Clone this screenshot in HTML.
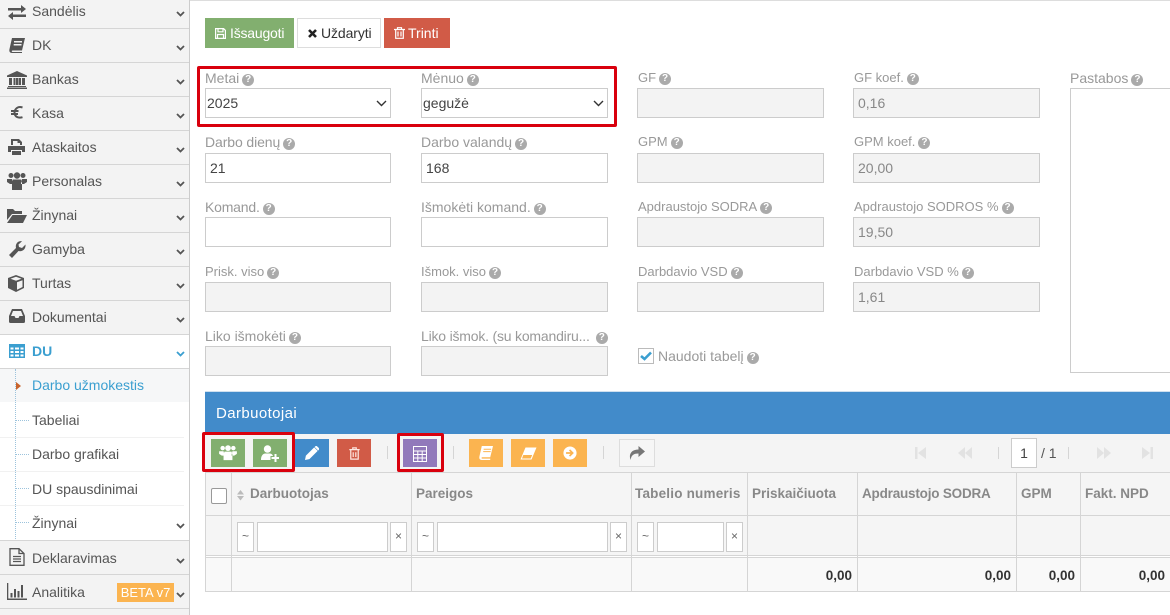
<!DOCTYPE html>
<html><head><meta charset="utf-8">
<style>
html,body{margin:0;padding:0}
body{width:1170px;height:615px;overflow:hidden;position:relative;background:#fff;font-family:"Liberation Sans",sans-serif;font-size:14px;color:#555}
.a,.s,.t,.l,.i,.btn,.h,.ln,.tb,.th,.fx,.ft{position:absolute}
svg{display:block}
.side{position:absolute;left:0;top:0;width:189px;height:615px;background:#f3f3f3;border-right:1px solid #ccc}
.s{left:0;width:189px;height:1px;background:#d5d5d5}
.t{left:32px;line-height:20px;color:#555;white-space:nowrap}
.i{fill:#555}
.c{position:absolute;left:176px;fill:none;stroke:#555;stroke-width:1.800}
.l{line-height:16px;color:#999;white-space:nowrap}
.n{font-size:13px}
.q{display:inline-block;width:12px;height:12px;border-radius:50%;background:#aaa;color:#fff;font:bold 10px/12px "Liberation Sans",sans-serif;text-align:center;margin-left:3px;vertical-align:1px}
.f{position:absolute;box-sizing:border-box;height:30px;border:1px solid #ccc;background:#fff;color:#444;padding:0 4px;line-height:29px;white-space:nowrap}
.d{background:#f3f3f3;color:#888}
.w{width:187px}
.x{width:186px}
.btn{top:18px;height:30px;box-sizing:border-box;color:#fff;line-height:30px;white-space:nowrap}
.tb{top:439px;width:34px;height:28px}
.tb svg{margin:5px auto 0}
.ln{background:#d5d5d5}
.th{top:472px;line-height:43px;font-weight:bold;color:#888;font-size:13.500px;white-space:nowrap}
.fx{top:522px;height:30px;box-sizing:border-box;background:#fff;border:1px solid #ccc;color:#666;text-align:center;font-size:12px;line-height:27px}
.ft{top:558px;height:33px;line-height:35px;font-weight:bold;color:#333;font-size:13.500px;text-align:right}
</style></head><body>

<div class="side"></div>
<div class="a" style="left:0;top:334px;width:189px;height:34px;background:#fff"></div>
<div class="a" style="left:0;top:369px;width:189px;height:171px;background:#fff"></div>
<div class="a" style="left:0;top:369px;width:189px;height:33px;background:#f6f7f8"></div>
<div class="a" style="left:15px;top:369px;width:0;height:170px;border-left:1px dotted #9cc3dc"></div>
<div class="a" style="left:16px;top:420px;width:13px;border-top:1px dotted #9cc3dc"></div>
<div class="a" style="left:16px;top:454px;width:13px;border-top:1px dotted #9cc3dc"></div>
<div class="a" style="left:16px;top:488px;width:13px;border-top:1px dotted #9cc3dc"></div>
<div class="a" style="left:16px;top:522px;width:13px;border-top:1px dotted #9cc3dc"></div>
<div class="a" style="left:0;top:437px;width:184px;height:1px;background:#f1f1f1"></div>
<div class="a" style="left:0;top:471px;width:184px;height:1px;background:#f1f1f1"></div>
<div class="a" style="left:0;top:505px;width:184px;height:1px;background:#f1f1f1"></div>

<div class="s" style="top:28px"></div><div class="s" style="top:62px"></div><div class="s" style="top:96px"></div><div class="s" style="top:130px"></div><div class="s" style="top:164px"></div><div class="s" style="top:198px"></div><div class="s" style="top:232px"></div><div class="s" style="top:266px"></div><div class="s" style="top:300px"></div><div class="s" style="top:334px"></div><div class="s" style="top:368px"></div><div class="s" style="top:540px"></div><div class="s" style="top:574px"></div><div class="s" style="top:608px"></div>

<div class="t" style="top:1px">Sandėlis</div>
<div class="t" style="top:35px">DK</div>
<div class="t" style="top:69px">Bankas</div>
<div class="t" style="top:103px">Kasa</div>
<div class="t" style="top:137px">Ataskaitos</div>
<div class="t" style="top:171px">Personalas</div>
<div class="t" style="top:205px">Žinynai</div>
<div class="t" style="top:239px">Gamyba</div>
<div class="t" style="top:273px">Turtas</div>
<div class="t" style="top:307px">Dokumentai</div>
<div class="t" style="top:341px;color:#3b9fd0;font-weight:bold">DU</div>
<div class="t" style="top:375px;color:#3b9fd0">Darbo užmokestis</div>
<div class="t" style="top:410px">Tabeliai</div>
<div class="t" style="top:444px">Darbo grafikai</div>
<div class="t" style="top:479px">DU spausdinimai</div>
<div class="t" style="top:513px">Žinynai</div>
<div class="t" style="top:548px">Deklaravimas</div>
<div class="t" style="top:582px">Analitika</div>
<div class="a" style="left:117px;top:583px;width:57px;height:19px;background:#fbb450;color:#fff;font-size:13px;line-height:19px;text-align:center">BETA v7</div>
<svg class="a" style="left:16px;top:382px" width="5" height="8"><path d="M0 0L5 4L0 8Z" fill="#c8632c"/></svg>

<svg class="c" style="top:11px" width="9" height="6"><path d="M1 1L4.500 4.500L8 1"/></svg>
<svg class="c" style="top:45px" width="9" height="6"><path d="M1 1L4.500 4.500L8 1"/></svg>
<svg class="c" style="top:79px" width="9" height="6"><path d="M1 1L4.500 4.500L8 1"/></svg>
<svg class="c" style="top:113px" width="9" height="6"><path d="M1 1L4.500 4.500L8 1"/></svg>
<svg class="c" style="top:147px" width="9" height="6"><path d="M1 1L4.500 4.500L8 1"/></svg>
<svg class="c" style="top:181px" width="9" height="6"><path d="M1 1L4.500 4.500L8 1"/></svg>
<svg class="c" style="top:215px" width="9" height="6"><path d="M1 1L4.500 4.500L8 1"/></svg>
<svg class="c" style="top:249px" width="9" height="6"><path d="M1 1L4.500 4.500L8 1"/></svg>
<svg class="c" style="top:283px" width="9" height="6"><path d="M1 1L4.500 4.500L8 1"/></svg>
<svg class="c" style="top:317px" width="9" height="6"><path d="M1 1L4.500 4.500L8 1"/></svg>
<svg class="c" style="top:351px;stroke:#3b9fd0" width="9" height="6"><path d="M1 1L4.500 4.500L8 1"/></svg>
<svg class="c" style="top:523px" width="9" height="6"><path d="M1 1L4.500 4.500L8 1"/></svg>
<svg class="c" style="top:558px" width="9" height="6"><path d="M1 1L4.500 4.500L8 1"/></svg>
<svg class="c" style="top:592px" width="9" height="6"><path d="M1 1L4.500 4.500L8 1"/></svg>

<!-- sidebar icons -->
<svg class="i a" style="left:8px;top:5px" width="18" height="15" viewBox="0 0 18 15"><path d="M0 3h13V0l5 4-5 4V5.500H0zM18 9.500H5V7l-5 4 5 4v-3h13z"/></svg>
<svg class="i a" style="left:9px;top:38px" width="16" height="15" viewBox="0 0 16 15"><path d="M3 0h13l-3 12.500H3.500C2.500 12.500 2.500 14 3.500 14H13v1H3C.5 15 0 13 .5 11zM5 3v1.500h8V3zM4.700 6v1.500h7.800V6z"/></svg>
<svg class="i a" style="left:7px;top:71px" width="20" height="18" viewBox="0 0 20 18"><path d="M10 0L20 4.500V6H0V4.500zM2 7h3v7H2zM6.500 7h2v7h-2zM9 7h2.500v7H9zM12 7h2v7h-2zM15 7h3v7h-3zM1 15h18v1H1zM0 16.500h20V18H0z"/></svg>
<svg class="a" style="left:11px;top:106px" width="12" height="13" viewBox="0 0 12 13"><path d="M11.500 1.500C7 0 4 2.500 3.500 6.500c0 4 3.500 6 8 4.700M0 5h7.500M0 8h7" fill="none" stroke="#555" stroke-width="2"/></svg>
<svg class="i a" style="left:8px;top:139px" width="17" height="16" viewBox="0 0 17 16"><path d="M3 0h8l3 3v3h-2V4H9.500V2H5v4H3zM0 7h17v6h-3v-2H3v2H0zM4 12h9v4H4z"/></svg>
<svg class="i a" style="left:7px;top:172px" width="20" height="18" viewBox="0 0 20 18"><circle cx="4" cy="3.500" r="2.500"/><circle cx="16" cy="3.500" r="2.500"/><circle cx="10" cy="3.500" r="3.200"/><path d="M0 7h5l1 4v1H3L0 10zM20 7h-5l-1 4v1h3l3-2zM6 7.500h8L15 11v7H5v-7z"/></svg>
<svg class="i a" style="left:7px;top:208px" width="20" height="15" viewBox="0 0 20 15"><path d="M0 1h6l2 2h7v3H5L0 12zM5.500 7H20l-4 8H0z"/></svg>
<svg class="i a" style="left:9px;top:241px" width="17" height="17" viewBox="0 0 17 17"><path d="M0 14L7 7C6 3 9-.5 13 .3L9.500 3.500 10 6l3 1L16.500 3.500C17 8 13.500 11 9.500 10L3 17z"/></svg>
<svg class="i a" style="left:8px;top:275px" width="16" height="17" viewBox="0 0 16 17"><path d="M8 0L16 3v10l-8 4-8-4V3zM2.500 3.700L8 5.800l5.500-2.100L8 1.800zM9 7.300v7.500l5.500-2.800V5.200z"/></svg>
<svg class="i a" style="left:9px;top:309px" width="16" height="14" viewBox="0 0 16 14"><path d="M3 0h10l3 7v5.500c0 1-.5 1.500-1.500 1.500h-13C.5 14 0 13.500 0 12.500V7zM4 2L2 7h3.500l1 2h3l1-2H14l-2-5z"/></svg>
<svg class="a" style="left:9px;top:344px" width="16" height="14" viewBox="0 0 16 14" fill="#3b9fd0"><path d="M0 0h16v14H0zM1.500 3.500v2h3v-2zM6 3.500v2h4v-2zM11.500 3.500v2h3v-2zM1.500 7v2h3V7zM6 7v2h4V7zM11.500 7v2h3V7zM1.500 10.500v2h3v-2zM6 10.500v2h4v-2zM11.500 10.500v2h3v-2z" fill-rule="evenodd"/></svg>
<svg class="a" style="left:9px;top:548px" width="16" height="18" viewBox="0 0 16 18" fill="none" stroke="#555" stroke-width="1.300"><path d="M1 .7h9L15 5.500V17.300H1zM10 .7V5.500h5M4 8.500h8M4 11h8M4 13.500h8"/></svg>
<svg class="i a" style="left:7px;top:583px" width="20" height="17" viewBox="0 0 20 17"><path d="M0 0h1.300v15.500H20V17H0zM3.500 10h2v4.500h-2zM7 6h2v8.500H7zM10.500 8h2v6.500h-2zM14 2h2v12.500h-2z"/></svg>

<!-- main top -->
<div class="a" style="left:190px;top:0;width:980px;height:1px;background:#ddd"></div>
<div class="btn" style="left:205px;width:89px;background:#82af6f;padding-left:25px;letter-spacing:-.2px">Išsaugoti</div>
<svg class="a" style="left:215px;top:28px" width="11" height="11" viewBox="0 0 11 11" fill="none" stroke="#fff" stroke-width="1.200"><path d="M.6.6h8L10.400 2.400v8H.6zM3 .8v3h5v-3M2.500 10.200V6.500h6v3.700"/></svg>
<div class="btn" style="left:297px;width:84px;background:#fff;border:1px solid #ddd;color:#333;padding-left:23px;line-height:28px;letter-spacing:-.1px">Uždaryti</div>
<svg class="a" style="left:308px;top:29px" width="9" height="9" viewBox="0 0 9 9"><path d="M1 1L8 8M8 1L1 8" stroke="#222" stroke-width="2.600"/></svg>
<div class="btn" style="left:384px;width:66px;background:#d15b47;padding-left:24px">Trinti</div>
<svg class="a" style="left:394px;top:27px" width="11" height="12" viewBox="0 0 11 12" fill="none" stroke="#fff" stroke-width="1.200"><path d="M0 2.500h11M3.500 2.500V.7h4v1.800M1.700 2.500V11.300h7.600V2.500M4 4.500v5M7 4.500v5"/></svg>

<!-- labels -->
<div class="l" style="left:205px;top:70px">Metai<span class="q">?</span></div>
<div class="l" style="left:421px;top:70px">Mėnuo<span class="q">?</span></div>
<div class="l n" style="left:638px;top:70px">GF<span class="q">?</span></div>
<div class="l n" style="left:854px;top:70px">GF koef.<span class="q">?</span></div>
<div class="l" style="left:1070px;top:70px">Pastabos<span class="q">?</span></div>
<div class="l" style="left:205px;top:134px;letter-spacing:-.1px">Darbo dienų<span class="q">?</span></div>
<div class="l" style="left:421px;top:134px">Darbo valandų<span class="q">?</span></div>
<div class="l n" style="left:638px;top:134px">GPM<span class="q">?</span></div>
<div class="l n" style="left:854px;top:134px">GPM koef.<span class="q">?</span></div>
<div class="l" style="left:205px;top:199px;letter-spacing:-.2px">Komand.<span class="q">?</span></div>
<div class="l" style="left:421px;top:199px">Išmokėti komand.<span class="q">?</span></div>
<div class="l n" style="left:638px;top:199px">Apdraustojo SODRA<span class="q">?</span></div>
<div class="l n" style="left:854px;top:199px">Apdraustojo SODROS %<span class="q">?</span></div>
<div class="l n" style="left:205px;top:264px">Prisk. viso<span class="q">?</span></div>
<div class="l n" style="left:421px;top:264px">Išmok. viso<span class="q">?</span></div>
<div class="l n" style="left:638px;top:264px">Darbdavio VSD<span class="q">?</span></div>
<div class="l n" style="left:854px;top:264px">Darbdavio VSD %<span class="q">?</span></div>
<div class="l" style="left:205px;top:328px">Liko išmokėti<span class="q">?</span></div>
<div class="l" style="left:421px;top:328px;letter-spacing:-.2px">Liko išmok. (su komandiru...<span class="q" style="margin-left:6px">?</span></div>

<!-- fields -->
<div class="f x" style="left:205px;top:88px;padding-left:1px">2025</div>
<div class="f w" style="left:421px;top:88px;padding-left:1px">gegužė</div>
<svg class="a" style="left:376px;top:100px" width="11" height="7" fill="none" stroke="#333" stroke-width="1.400"><path d="M1 1L5.500 5.500L10 1"/></svg>
<svg class="a" style="left:593px;top:100px" width="11" height="7" fill="none" stroke="#333" stroke-width="1.400"><path d="M1 1L5.500 5.500L10 1"/></svg>
<div class="f d w" style="left:637px;top:88px"></div>
<div class="f d w" style="left:853px;top:88px">0,16</div>
<div class="f x" style="left:205px;top:153px">21</div>
<div class="f w" style="left:421px;top:153px">168</div>
<div class="f d w" style="left:637px;top:153px"></div>
<div class="f d w" style="left:853px;top:153px">20,00</div>
<div class="f x" style="left:205px;top:217px"></div>
<div class="f w" style="left:421px;top:217px"></div>
<div class="f d w" style="left:637px;top:217px"></div>
<div class="f d w" style="left:853px;top:217px">19,50</div>
<div class="f d x" style="left:205px;top:282px"></div>
<div class="f d w" style="left:421px;top:282px"></div>
<div class="f d w" style="left:637px;top:282px"></div>
<div class="f d w" style="left:853px;top:282px">1,61</div>
<div class="f d x" style="left:205px;top:346px"></div>
<div class="f d w" style="left:421px;top:346px"></div>
<div class="f" style="left:1070px;top:88px;width:110px;height:285px"></div>

<div class="a" style="left:638px;top:348px;width:16px;height:16px;box-sizing:border-box;border:1px solid #bbb;background:#fff"></div>
<svg class="a" style="left:640px;top:351px" width="12" height="10" viewBox="0 0 12 10"><path d="M1 5L4.500 8L11 1.500" fill="none" stroke="#3b9fd0" stroke-width="2.600"/></svg>
<div class="l" style="left:658px;top:348px">Naudoti tabelį<span class="q">?</span></div>

<!-- panel -->
<div class="a" style="left:205px;top:391px;width:965px;height:1px;background:#cfe0ef"></div>
<div class="a" style="left:205px;top:392px;width:965px;height:42px;background:#428bca"></div>
<div class="a" style="left:216px;top:403px;color:#fff;font-size:15px;line-height:21px;letter-spacing:.4px">Darbuotojai</div>
<div class="a" style="left:205px;top:434px;width:965px;height:38px;background:#f4f4f4"></div>

<!-- toolbar -->
<div class="tb" style="left:211px;background:#82af6f"><svg width="18" height="16" viewBox="0 0 20 18" fill="#fff" style="margin-top:6px"><circle cx="4" cy="3.500" r="2.500"/><circle cx="16" cy="3.500" r="2.500"/><circle cx="10" cy="3.500" r="3.200"/><path d="M0 7h5l1 4v1H3L0 10zM20 7h-5l-1 4v1h3l3-2zM6 7.500h8L15 11v6H5v-6z"/></svg></div>
<div class="tb" style="left:253px;background:#82af6f"><svg width="18" height="18" viewBox="0 0 18 18" fill="#fff"><circle cx="6.500" cy="5" r="3.700"/><path d="M0 16c0-4 1.500-6 4-6.500h5c1.500.3 2.500 1 3 2.500H9.500v4z"/><path d="M10.500 13h3v-3h2v3h2.500v2h-2.500v3h-2v-3h-3z"/></svg></div>
<div class="tb" style="left:295px;background:#428bca"><svg width="14" height="14" viewBox="0 0 16 16" fill="#fff" style="margin-top:7px"><path d="M0 16l1-5L10.500 1.500l4 4L5 15zM11.500.5c1-.8 2-.6 2.500 0l1.700 1.700c.6.700.6 1.500 0 2.300l-.7.700-4-4z"/></svg></div>
<div class="tb" style="left:337px;background:#d15b47"><svg width="11" height="13" viewBox="0 0 12 15" fill="none" stroke="#fde6e0" stroke-width="1.400" style="margin-top:8px"><path d="M0 3h12M4 3V1h4v2M1.700 3v11h8.600V3M4.500 6v5.500M7.500 6v5.500"/></svg></div>
<div class="tb" style="left:403px;background:#9179bb"><svg width="14" height="16" viewBox="0 0 14 16" fill="none" stroke="#fff" style="margin-top:7px"><path d="M.5.500h13v15H.5zM.5 5h13M.5 8.500h13M.5 12h13M4.800 5v10.500M9.200 5v10.500"/></svg></div>
<div class="tb" style="left:469px;background:#fbb450"><svg width="14" height="14" viewBox="0 0 15 15" fill="#fff" style="margin-top:7px"><path d="M3 0h12l-3 12H3.500C2.500 12 2.500 13.500 3.500 13.500H12V15H3C.5 15 0 13 .5 11zM5 3v1h8V3zM4.500 5.500v1h8v-1z"/></svg></div>
<div class="tb" style="left:511px;background:#fbb450"><svg width="17" height="13" viewBox="0 0 17 13" style="margin-top:8px"><path d="M5.500.5H16.500L11.500 12.500H.5zM3.300 8L2 11.500h8.700L12.200 8z" fill="#fff" fill-rule="evenodd"/></svg></div>
<div class="tb" style="left:553px;background:#fbb450"><svg width="14" height="14" viewBox="0 0 16 16" style="margin-top:7px"><circle cx="8" cy="8" r="7.500" fill="#fff"/><path d="M3.500 8h7M7.500 4.500L11 8L7.500 11.500" fill="none" stroke="#fbb450" stroke-width="2"/></svg></div>
<div class="a" style="left:619px;top:439px;width:36px;height:28px;box-sizing:border-box;border:1px solid #ddd;background:#f6f6f6"></div>
<svg class="a" style="left:629px;top:446px" width="16" height="14" viewBox="0 0 16 14"><path d="M9.500 0L16 5.500 9.500 11V7.500C5.500 7.500 2.500 8.500 1.500 14 -.5 8 2.500 3.500 9.500 3.500z" fill="#777"/></svg>
<div class="ln" style="left:387px;top:446px;width:1px;height:13px"></div>
<div class="ln" style="left:453px;top:446px;width:1px;height:13px"></div>
<div class="ln" style="left:603px;top:446px;width:1px;height:13px"></div>

<!-- pager -->
<svg class="a" style="left:915px;top:447px" width="11" height="12" viewBox="0 0 11 12" fill="#e2e2e2"><path d="M0 0h2.500v12H0zM11 0v12L3 6z"/></svg>
<svg class="a" style="left:958px;top:447px" width="14" height="12" viewBox="0 0 14 12" fill="#e2e2e2"><path d="M7 0v12L0 6zM14 0v12L7 6z"/></svg>
<svg class="a" style="left:1097px;top:447px" width="14" height="12" viewBox="0 0 14 12" fill="#e2e2e2"><path d="M0 0v12l7-6zM7 0v12l7-6z"/></svg>
<svg class="a" style="left:1142px;top:447px" width="11" height="12" viewBox="0 0 11 12" fill="#e2e2e2"><path d="M0 0v12l8-6zM8.500 0H11v12H8.500z"/></svg>
<div class="ln" style="left:998px;top:447px;width:1px;height:12px"></div>
<div class="ln" style="left:1068px;top:447px;width:1px;height:12px"></div>
<div class="a" style="left:1011px;top:438px;width:26px;height:30px;box-sizing:border-box;border:1px solid #ccc;background:#fff;text-align:center;line-height:29px;color:#444">1</div>
<div class="a" style="left:1041px;top:444px;line-height:18px;color:#555">/ 1</div>

<!-- table -->
<div class="a" style="left:205px;top:472px;width:965px;height:83px;background:#f5f5f5"></div>
<div class="a" style="left:205px;top:558px;width:965px;height:33px;background:#f9f9f9"></div>
<div class="ln" style="left:205px;top:472px;width:965px;height:1px"></div>
<div class="ln" style="left:205px;top:515px;width:965px;height:1px"></div>
<div class="ln" style="left:205px;top:555px;width:965px;height:1px"></div>
<div class="ln" style="left:205px;top:557px;width:965px;height:1px"></div>
<div class="ln" style="left:205px;top:591px;width:965px;height:1px"></div>
<div class="ln" style="left:205px;top:472px;width:1px;height:120px"></div>
<div class="ln" style="left:231px;top:472px;width:1px;height:120px"></div>
<div class="ln" style="left:411px;top:472px;width:1px;height:120px"></div>
<div class="ln" style="left:631px;top:472px;width:1px;height:120px"></div>
<div class="ln" style="left:747px;top:472px;width:1px;height:120px"></div>
<div class="ln" style="left:857px;top:472px;width:1px;height:120px"></div>
<div class="ln" style="left:1016px;top:472px;width:1px;height:120px"></div>
<div class="ln" style="left:1080px;top:472px;width:1px;height:120px"></div>

<div class="a" style="left:211px;top:488px;width:14px;height:14px;border:1px solid #999;border-radius:2px;background:#fff"></div>
<svg class="a" style="left:237px;top:490px" width="7" height="11" viewBox="0 0 7 11" fill="#bbb"><path d="M3.500 0L7 4.500H0zM0 6h7L3.500 10.500z"/></svg>
<div class="th" style="left:250px">Darbuotojas</div>
<div class="th" style="left:416px">Pareigos</div>
<div class="th" style="left:635px;letter-spacing:.2px">Tabelio numeris</div>
<div class="th" style="left:752px">Priskaičiuota</div>
<div class="th" style="left:862px;letter-spacing:-.2px">Apdraustojo SODRA</div>
<div class="th" style="left:1021px">GPM</div>
<div class="th" style="left:1085px">Fakt. NPD</div>

<div class="fx" style="left:237px;width:17px">~</div>
<div class="fx" style="left:257px;width:131px"></div>
<div class="fx" style="left:390px;width:17px">×</div>
<div class="fx" style="left:417px;width:17px">~</div>
<div class="fx" style="left:437px;width:171px"></div>
<div class="fx" style="left:610px;width:17px">×</div>
<div class="fx" style="left:637px;width:17px">~</div>
<div class="fx" style="left:657px;width:67px"></div>
<div class="fx" style="left:726px;width:17px">×</div>

<div class="ft" style="left:750px;width:102px">0,00</div>
<div class="ft" style="left:860px;width:151px">0,00</div>
<div class="ft" style="left:1019px;width:56px">0,00</div>
<div class="ft" style="left:1083px;width:82px">0,00</div>

<!-- red boxes -->
<div class="a" style="left:197px;top:66px;width:420px;height:61px;box-sizing:border-box;border:3px solid #d9000d;border-radius:2px"></div>
<div class="a" style="left:202px;top:432px;width:93px;height:40px;box-sizing:border-box;border:3px solid #d9000d;border-radius:2px"></div>
<div class="a" style="left:397px;top:433px;width:47px;height:39px;box-sizing:border-box;border:3px solid #d9000d;border-radius:2px"></div>
</body></html>
